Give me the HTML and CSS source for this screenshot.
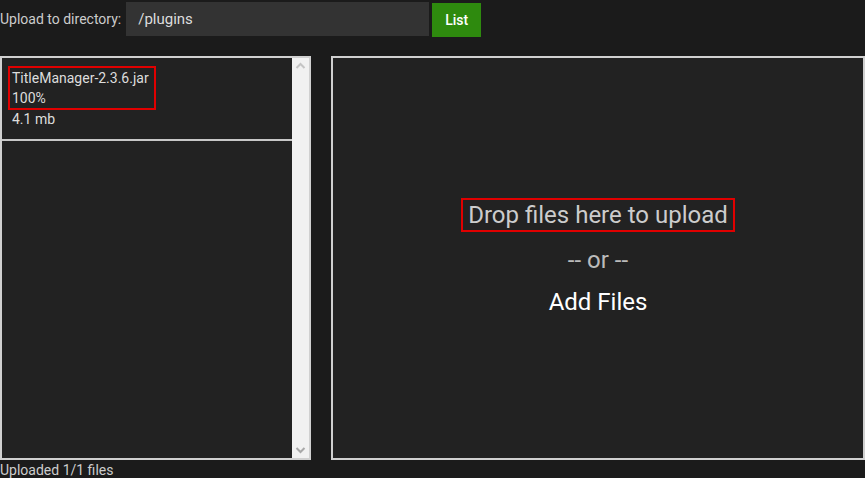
FILE: index.html
```html
<!DOCTYPE html>
<html lang="en">
<head>
  <meta charset="UTF-8">
  <title>Upload</title>
  <link rel="stylesheet" href="styles.css">
</head>
<body>

  <div id="dirBar">
    <label for="dirInput">Upload to directory:</label>
    <input id="dirInput" type="text" value="/plugins">
    <button id="listButton">List</button>
  </div>

  <div id="panels">
    <div id="fileList">
      <div class="files">
        <div class="fileItem">
          <div class="fileMain">
            <div>TitleManager-2.3.6.jar</div>
            <div>100%</div>
          </div>
          <div class="fileSize">4.1 mb</div>
        </div>
      </div>
      <div class="scrollbar">
        <svg width="17" height="17" viewBox="0 0 17 17"><path d="M4.5 10 L8.5 6 L12.5 10" fill="none" stroke="#c4c4c4" stroke-width="2"/></svg>
        <svg width="17" height="17" viewBox="0 0 17 17"><path d="M4.5 7 L8.5 11 L12.5 7" fill="none" stroke="#a8a8a8" stroke-width="2"/></svg>
      </div>
    </div>

    <div id="dropZone">
      <div class="dropText">Drop files here to upload</div>
      <div class="orText">-- or --</div>
      <div class="addFiles">Add Files</div>
    </div>
  </div>

  <div id="status">Uploaded 1/1 files</div>

</body>
</html>
```

FILE: styles.css
```css
html, body {
  margin: 0;
  padding: 0;
  height: 100%;
  background: #1b1b1b;
  font-family: Roboto, 'Liberation Sans', sans-serif;
  color: #ddd;
  overflow: hidden;
}

#dirBar {
  display: flex;
  align-items: center;
  height: 36px;
  padding-top: 1px;
}

#dirBar label {
  font-size: 14px;
  color: #ccc;
  margin-right: 5px;
}

#dirInput {
  width: 303px;
  height: 34px;
  box-sizing: border-box;
  border: none;
  background: #333;
  color: #ddd;
  font-family: inherit;
  font-size: 15px;
  padding: 0 12px;
  outline: none;
}

#listButton {
  margin-left: 3px;
  width: 49px;
  height: 34px;
  margin-top: 2px;
  border: none;
  background: #2e8a0e;
  color: #fff;
  font-family: inherit;
  font-size: 14px;
  font-weight: 500;
  cursor: pointer;
}

#panels {
  display: flex;
  gap: 20px;
  margin-top: 19px;
  height: 404px;
}

#fileList {
  width: 311px;
  box-sizing: border-box;
  border: 2px solid #d0d0d0;
  display: flex;
  background: #222;
}

.files {
  flex: 1;
}

.fileItem {
  height: 83px;
  box-sizing: border-box;
  border-bottom: 2px solid #c8c8c8;
  padding: 8px 0 0 6px;
  font-size: 14px;
  line-height: 20px;
  color: #ddd;
}

.fileMain {
  display: inline-block;
  border: 2px solid #e00000;
  padding: 0 5px 0 2px;
}

.fileSize {
  padding-left: 4px;
  margin-top: -1px;
}

.scrollbar {
  width: 17px;
  background: #f1f1f1;
  display: flex;
  flex-direction: column;
  justify-content: space-between;
}

.scrollbar svg {
  display: block;
}

#dropZone {
  flex: 1;
  box-sizing: border-box;
  border: 2px solid #d0d0d0;
  background: #222;
  display: flex;
  flex-direction: column;
  align-items: center;
  justify-content: center;
  font-size: 24px;
  line-height: 28px;
  gap: 14px;
}

.dropText {
  color: #ccc;
  border: 2px solid #e00000;
  padding: 1px 5px;
  margin-top: -2px;
}

.orText {
  color: #bbb;
}

.addFiles {
  color: #fff;
}

#status {
  font-size: 14px;
  line-height: 18px;
  color: #ccc;
  padding-top: 1px;
}
```
